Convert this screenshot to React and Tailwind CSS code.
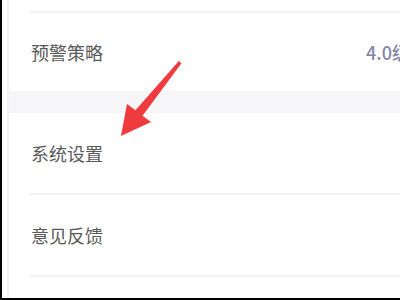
export default function App() {
  const rows = [
    { label: "系统设置" },
    { label: "意见反馈" },
  ];

  return (
    <div
      className="relative w-[400px] h-[300px] overflow-hidden bg-white flex flex-col"
      style={{ fontFamily: '"Noto Sans CJK SC", "Noto Sans", sans-serif' }}
    >
      <div className="flex flex-1 min-h-0">
        <div className="w-[2px] bg-black" />
        <div className="w-[5px]" />
        <div className="w-[2px] bg-[#f1f1f1]" />
        <div className="flex-1 flex flex-col min-w-0">
          <div className="h-[11px]" />
          <div className="h-[2px] ml-[20px] bg-[#f3f3f3]" />
          <div className="h-[78px] flex items-center justify-between pl-[22px]">
            <span className="text-[18px] text-[#5a5a5a]">预警策略</span>
            <span className="text-[18px] font-medium text-[#8585a8] mr-[-10px] whitespace-nowrap">4.0级</span>
          </div>
          <div className="h-[22px] bg-[#f6f6f8]" />
          {rows.map((r) => (
            <div key={r.label}>
              <div className="h-[80px] flex items-center pl-[22px]">
                <span className="text-[18px] text-[#5a5a5a]">{r.label}</span>
              </div>
              <div className="h-[2px] ml-[20px] bg-[#f3f3f3]" />
            </div>
          ))}
        </div>
      </div>
      <div className="h-[2px] bg-black" />

      <svg className="absolute left-0 top-0" width="400" height="300" viewBox="0 0 400 300">
        <polygon
          points="178.8,61.1 181.5,63.2 142.5,115.8 151,122 121,136 127,104 135.5,110.2"
          fill="#ef3a3e"
          strokeLinejoin="round"
        />
      </svg>
    </div>
  );
}
